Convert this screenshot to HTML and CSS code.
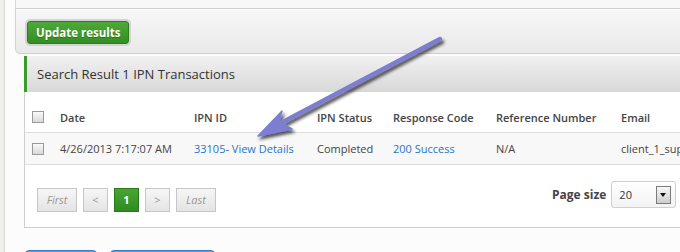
FILE: index.html
```html
<!DOCTYPE html>
<html lang="en">
<head>
  <meta charset="UTF-8" />
  <title>IPN Transactions</title>
  <link rel="stylesheet" href="styles.css">
</head>
<body>

<div class="layout">
  <div class="side-strip"></div>

  <div class="main">
    <div class="top-panel"></div>

    <div class="filter-panel">
      <button class="update-btn">Update results</button>
    </div>

    <div class="results">
      <div class="results-head">Search Result 1 IPN Transactions</div>

      <div class="results-body">
        <table class="ipn-table">
          <thead>
            <tr>
              <th class="col-check"><span class="check"></span></th>
              <th class="col-date">Date</th>
              <th class="col-id">IPN ID</th>
              <th class="col-status">IPN Status</th>
              <th class="col-code">Response Code</th>
              <th class="col-ref">Reference Number</th>
              <th class="col-email">Email</th>
            </tr>
          </thead>
          <tbody>
            <tr>
              <td class="col-check"><span class="check"></span></td>
              <td>4/26/2013 7:17:07 AM</td>
              <td><a href="#">33105- View Details</a></td>
              <td>Completed</td>
              <td><a href="#">200 Success</a></td>
              <td>N/A</td>
              <td>client_1_support@example.com</td>
            </tr>
          </tbody>
        </table>

        <div class="pager">
          <div class="pages">
            <span class="page-btn wide">First</span>
            <span class="page-btn">&lt;</span>
            <span class="page-btn current">1</span>
            <span class="page-btn">&gt;</span>
            <span class="page-btn wide">Last</span>
          </div>
          <div class="page-size">
            <span class="page-size-label">Page size</span>
            <div class="size-select">
              <span>20</span>
              <span class="select-arrow"></span>
            </div>
            <span class="page-size-label">Page 1 of 1</span>
          </div>
        </div>
      </div>

      <div class="bottom-actions">
        <button class="blue-btn">Back</button>
        <button class="blue-btn long">Export results</button>
      </div>
    </div>
  </div>
</div>

<!-- annotation arrow drawn over the screenshot -->
<svg class="arrow" width="680" height="252" viewBox="0 0 680 252">
  <defs>
    <filter id="shadow" x="-20%" y="-20%" width="140%" height="140%">
      <feDropShadow dx="2" dy="3" stdDeviation="1.6" flood-color="#222" flood-opacity="0.75"/>
    </filter>
  </defs>
  <g filter="url(#shadow)">
    <path d="M440 39 L279 124" stroke="#7d7dd2" stroke-width="4.5" stroke-linecap="round" fill="none"/>
    <path d="M258 136 L282 111 L279 122 L292 129 Z" fill="#7d7dd2" stroke="#7d7dd2" stroke-width="1.5" stroke-linejoin="round"/>
  </g>
</svg>

</body>
</html>
```

FILE: styles.css
```css
html, body {
  overflow: hidden;
}

body {
  margin: 0;
  padding: 0;
  width: 680px;
  height: 252px;
  position: relative;
  background-color: #fcfcfc;
  font-family: 'Open Sans', 'DejaVu Sans', sans-serif;
  font-size: 11px;
  color: #444;
}

.layout {
  display: flex;
  width: 900px;
}

.side-strip {
  width: 4px;
  height: 260px;
  background-color: #efefeb;
  border-right: 1px solid #d8d8d4;
}

.main {
  flex-grow: 1;
  padding-left: 10px;
}

.top-panel {
  height: 8px;
  background-color: #f8f8f8;
  border-left: 1px solid #d6d6d6;
  border-bottom: 1px solid #cfcfcf;
}

.filter-panel {
  height: 34px;
  padding: 10px 0 0 9px;
  background: linear-gradient(#f7f7f7, #e9e9e9);
  border-left: 1px solid #d2d2d2;
  border-bottom: 1px solid #cdcdcd;
  border-bottom-left-radius: 5px;
  box-shadow: inset 0 1px 0 #fff;
}

.update-btn {
  margin: 2px;
  height: 23px;
  padding: 0 8px;
  background: linear-gradient(#4ea83a, #338f22);
  border: 1px solid #2b7c1c;
  border-radius: 3px;
  box-shadow: 0 0 0 2px #d3d3d3;
  color: #fff;
  font-family: 'Open Sans', sans-serif;
  font-weight: bold;
  font-size: 11.5px;
  text-shadow: 0 1px 0 #2a6f1c;
}

.results {
  margin: 2px 0 0 9px;
}

.results-head {
  height: 36px;
  line-height: 36px;
  padding-left: 10px;
  border-left: 3px solid #3c9a2c;
  background: linear-gradient(#f1f1f1, #d8d8d8);
  font-size: 13px;
  color: #333;
}

.results-body {
  padding: 10px 0 15px;
  background-color: #fff;
  border-left: 1px solid #cfcfcf;
  border-bottom: 1px solid #cfcfcf;
}

.ipn-table {
  table-layout: fixed;
  border-collapse: collapse;
  width: 796px;
}

.ipn-table th,
.ipn-table td {
  padding: 0 0 0 8px;
  text-align: left;
  white-space: nowrap;
  overflow: hidden;
  border-bottom: 1px solid #dedede;
}

.ipn-table th {
  height: 30px;
  font-weight: 600;
  color: #444;
}

.ipn-table td {
  height: 31px;
  background-color: #f8f8f8;
  color: #444;
}

.ipn-table a {
  color: #2b73c9;
  text-decoration: none;
}

.ipn-table .col-check {
  width: 20px;
  padding-left: 7px;
}

.col-date { width: 126px; }
.col-id { width: 115px; }
.col-status { width: 68px; }
.col-code { width: 95px; }
.col-ref { width: 117px; }
.col-email { width: 200px; }

.check {
  display: block;
  width: 10px;
  height: 10px;
  border: 1px solid #9a9a9a;
  background: linear-gradient(#fafafa, #d9d9d9);
}

.pager {
  display: flex;
  align-items: flex-start;
  margin-top: 16px;
  padding-left: 12px;
}

.pages {
  display: flex;
  gap: 6px;
  margin-top: 7px;
}

.page-btn {
  width: 23px;
  height: 22px;
  line-height: 22px;
  text-align: center;
  background: linear-gradient(#f6f6f6, #e4e4e4);
  border: 1px solid #c6c6c6;
  color: #999;
  font-size: 11px;
}

.page-btn.wide {
  width: 38px;
  font-style: italic;
}

.page-btn.current {
  background: linear-gradient(#48a535, #2f8b20);
  border-color: #2a7a1c;
  color: #fff;
  font-weight: bold;
}

.page-size {
  display: flex;
  align-items: center;
  gap: 5px;
  margin-left: 336px;
}

.page-size-label {
  font-size: 12px;
  font-weight: bold;
  color: #444;
  white-space: nowrap;
}

.size-select {
  display: flex;
  align-items: center;
  justify-content: space-between;
  width: 52px;
  height: 25px;
  padding: 0 4px 0 7px;
  border: 1px solid #cfcfcf;
  border-radius: 3px;
  background: linear-gradient(#fff, #f3f3f3);
  color: #333;
  font-size: 11px;
}

.select-arrow {
  position: relative;
  width: 13px;
  height: 16px;
  border: 1px solid #7a7a7a;
  background: linear-gradient(#f7f7f7, #cdcdcd);
}

.select-arrow::after {
  content: "";
  position: absolute;
  left: 3px;
  top: 6px;
  border-left: 3.5px solid transparent;
  border-right: 3.5px solid transparent;
  border-top: 4px solid #111;
}

.bottom-actions {
  display: flex;
  gap: 13px;
  margin-top: 22px;
  padding-left: 1px;
}

.blue-btn {
  width: 72px;
  height: 30px;
  padding-top: 10px;
  background: linear-gradient(#5b9de0, #3f86d2);
  border: 1px solid #3a7bc6;
  border-radius: 4px;
  color: #fff;
  font-family: 'Open Sans', sans-serif;
  font-weight: bold;
}

.blue-btn.long {
  width: 105px;
}

.arrow {
  position: absolute;
  top: 0;
  left: 0;
  pointer-events: none;
}
```
